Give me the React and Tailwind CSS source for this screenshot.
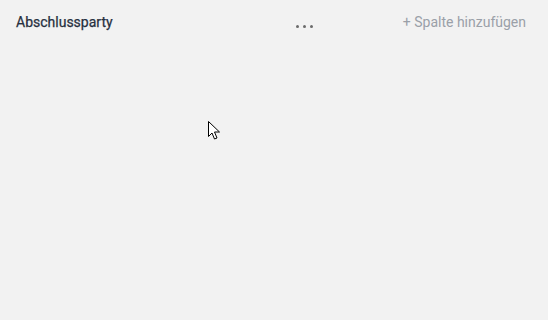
import React from "react";

function Cursor() {
  return (
    <svg className="absolute left-[208px] top-[121px]" width="13" height="20" viewBox="0 0 13 20">
      <path d="M0.5 0.5 L0.5 15.5 L4 12 L6.5 18 L9 17 L6.5 11 L11.5 11 Z" fill="#fff" stroke="#000" strokeWidth="1" strokeLinejoin="miter" />
    </svg>
  );
}

export default function App() {
  return (
    <div className="relative w-[548px] h-[320px] bg-[#f2f2f2] font-['Roboto',sans-serif] overflow-hidden">
      <div className="flex items-start">
        {/* Column */}
        <div className="w-[330px] px-4 pt-[13px]">
          <div className="flex items-center justify-between h-[18px]">
            <span className="text-sm font-normal text-[#27303f] [-webkit-text-stroke:0.25px_#27303f]">Abschlussparty</span>
            <button className="flex items-center gap-[4px] pr-[1px] mt-[8px]">
              <span className="w-[3px] h-[3px] rounded-full bg-[#6b6b6b]" />
              <span className="w-[3px] h-[3px] rounded-full bg-[#6b6b6b]" />
              <span className="w-[3px] h-[3px] rounded-full bg-[#6b6b6b]" />
            </button>
          </div>
        </div>
        {/* Add column */}
        <div className="flex-1 flex justify-end pr-[22px] pt-[13px]">
          <button className="text-sm text-[#9aa0a8] h-[18px] leading-[18px]">+ Spalte hinzufügen</button>
        </div>
      </div>
      <Cursor />
    </div>
  );
}
